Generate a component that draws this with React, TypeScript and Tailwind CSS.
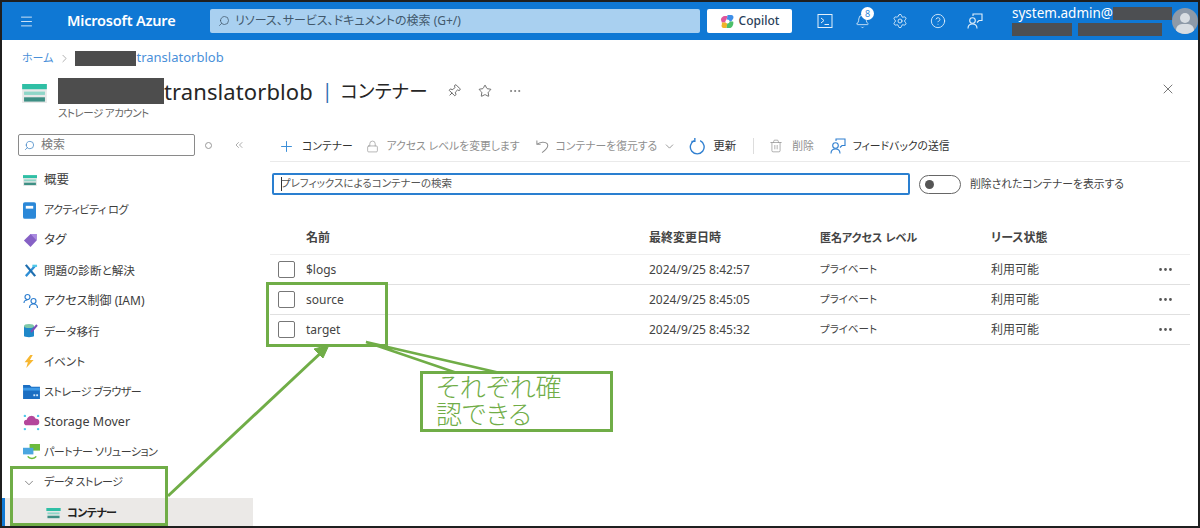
import { Bell, ChevronDown, ChevronRight, ChevronsLeft, CircleHelp, Ellipsis, Lock, Menu, Pin, Plus, Search, Settings, Star, Trash2, X } from "lucide-react";

const font = "font-['Noto_Sans','Noto_Sans_CJK_JP',sans-serif] [font-feature-settings:'palt']";
const narrow = "text-[11px] tracking-[-0.5px]";

function StorageIcon({ className }: { className: string }) {
  return (
    <svg viewBox="0 0 26 20" className={className}>
      <rect x="0" y="0" width="26" height="20" fill="#e8e8e8" />
      <rect x="0" y="0" width="26" height="5.5" fill="#2fbfa5" />
      <rect x="2" y="8" width="22" height="3.5" fill="#8fd6c8" />
      <rect x="2" y="14" width="22" height="4.5" fill="#3d8f84" />
    </svg>
  );
}

function LogIcon() {
  return (
    <svg viewBox="0 0 14 18" className="w-[13px] h-[17px]">
      <rect width="14" height="18" rx="2" fill="#2b88d8" />
      <rect x="3" y="4" width="8" height="3" fill="#fff" />
    </svg>
  );
}

function TagIcon() {
  return (
    <svg viewBox="0 0 16 16" className="w-[15px] h-[15px]">
      <path d="M1 8 8 1h6.5v7L8 15z" fill="#8661c5" />
      <path d="M8 1h6.5v7z" fill="#a98ae0" />
    </svg>
  );
}

function ToolsIcon() {
  return (
    <svg viewBox="0 0 16 16" className="w-[15px] h-[15px]" fill="none" strokeWidth="2.4">
      <path d="M3 14 13 3" stroke="#2f8fd6" />
      <path d="M3 2l10 12" stroke="#1f6fb0" />
      <path d="M10 3h5" stroke="#50c8e8" />
    </svg>
  );
}

function IamIcon() {
  return (
    <svg viewBox="0 0 16 16" className="w-[16px] h-[16px]" fill="none" stroke="#2f7fd0" strokeWidth="1.2">
      <circle cx="4.5" cy="4" r="2.5" />
      <path d="M1 10c0-2 1.5-3 3.5-3" />
      <circle cx="10.5" cy="8" r="2.5" />
      <path d="M6.5 15c0-2.500 1.500-4 4-4s4 1.500 4 4" />
    </svg>
  );
}

function MigrateIcon() {
  return (
    <svg viewBox="0 0 16 16" className="w-[16px] h-[16px]">
      <path d="M1 3h10v10c0 1.500-10 1.500-10 0z" fill="#1f88c9" />
      <ellipse cx="6" cy="3" rx="5" ry="2" fill="#7fc8a9" />
      <path d="M8 9l6-7" stroke="#7b4fb5" strokeWidth="2" />
    </svg>
  );
}

function BoltIcon() {
  return (
    <svg viewBox="0 0 16 16" className="w-[13px] h-[15px]">
      <path d="M9 0 2 9h4l-2 7 9-10H8.500L12 0z" fill="#f7b731" />
    </svg>
  );
}

function BrowserIcon() {
  return (
    <svg viewBox="0 0 18 16" className="w-[17px] h-[15px]">
      <path d="M0 1h7l2 2h9v13H0z" fill="#1b6ec2" />
      <rect x="0" y="4" width="18" height="3" fill="#3f9be8" />
      <rect x="11" y="11" width="2" height="2" fill="#cfe6fb" />
      <rect x="14" y="11" width="2" height="2" fill="#cfe6fb" />
    </svg>
  );
}

function MoverIcon() {
  return (
    <svg viewBox="0 0 18 18" className="w-[17px] h-[17px]">
      <path d="M4 12a3 3 0 0 1 0-6 5 5 0 0 1 9.500-1A3.500 3.500 0 0 1 14 12z" fill="#b4479b" />
      <circle cx="2" cy="2" r="1.300" fill="#50c8e8" />
      <circle cx="16" cy="2" r="1.300" fill="#50c8e8" />
      <circle cx="2" cy="16" r="1.300" fill="#50c8e8" />
      <circle cx="16" cy="16" r="1.300" fill="#50c8e8" />
    </svg>
  );
}

function PartnerIcon() {
  return (
    <svg viewBox="0 0 18 18" className="w-[17px] h-[17px]">
      <rect x="7" y="0" width="11" height="7" fill="#6cbb3c" />
      <rect x="0" y="4" width="11" height="7" fill="#4aa6e0" />
      <path d="M5 13a5 4 0 0 0 9 0" fill="none" stroke="#6cbb3c" strokeWidth="1.600" />
    </svg>
  );
}

function CopilotIcon() {
  return (
    <svg viewBox="0 0 16 16" className="w-[15px] h-[15px]">
      <path d="M8 1h4c2 0 3 2 2 4l-2 3H7z" fill="#3f8fe8" />
      <path d="M1 6c0-2 2-4 4-4h3L6 9H2z" fill="#e0559b" />
      <path d="M2 9h6l-1 6H4c-2 0-3-2-2-4z" fill="#f0b429" />
      <path d="M8 8h6c1 3-1 7-4 7H7z" fill="#4cc06a" />
      <circle cx="8" cy="8" r="2.200" fill="#fff" />
    </svg>
  );
}

function TerminalIcon() {
  return (
    <svg viewBox="0 0 16 16" className="ml-[25px] w-[16px] h-[16px]" fill="none" stroke="#e3f0fa" strokeWidth="1">
      <rect x="1" y="1.500" width="14" height="13" />
      <path d="M4 5l3 2.500L4 10M7.500 11.500H12" />
    </svg>
  );
}

function FeedbackIcon({ className, color }: { className: string; color: string }) {
  return (
    <svg viewBox="0 0 16 16" className={className} fill="none" stroke={color} strokeWidth="1.100">
      <circle cx="5.500" cy="7.500" r="2.800" />
      <path d="M1 15.500c0-2.800 1.800-4.500 4.500-4.500s4.500 1.700 4.500 4.500" />
      <path d="M6 3V1h9v6.500h-3l-2 2" />
    </svg>
  );
}

function RefreshIcon() {
  return (
    <svg viewBox="0 0 16 16" className="ml-[13px] w-[17px] h-[17px]" fill="none" stroke="#2f7fd0" strokeWidth="1.300">
      <path d="M10.500 2.500A6.500 6.500 0 1 1 5 2.500" />
      <path d="M5.500 0v3.200H2.300" />
    </svg>
  );
}

function UndoIcon() {
  return (
    <svg viewBox="0 0 16 16" className="ml-[15px] w-[15px] h-[15px]" fill="none" stroke="#8f8f8f" strokeWidth="1.100">
      <path d="M2 1.500v4h4" />
      <path d="M2.500 5.500C5 3 11 2.500 13 5c2 3-2 7-5.500 9.500" />
    </svg>
  );
}

function Avatar() {
  return (
    <div className="relative w-[26px] h-[26px] rounded-full bg-[#8e9aa8] overflow-hidden shrink-0">
      <div className="absolute left-[8px] top-[5px] w-[10px] h-[10px] rounded-full bg-[#d8dde2]" />
      <div className="absolute left-[4px] top-[16px] w-[18px] h-[12px] rounded-full bg-[#d8dde2]" />
    </div>
  );
}

function TopBar() {
  return (
    <div className="h-[38px] bg-[#0f78d4] flex items-center text-white shrink-0">
      <Menu className="w-[15px] h-[15px] ml-[17px] text-[#d7e9f8]" strokeWidth={1.5} />
      <div className="ml-[33px] w-[143px] text-[14.500px] font-semibold tracking-[-0.2px]">Microsoft Azure</div>
      <div className="w-[490px] h-[24px] bg-[#a9d0f0] rounded-[2px] flex items-center pl-[8px] text-[#41586c] text-[12px]">
        <Search className="w-[12px] h-[12px] -scale-x-100" strokeWidth={1.5} />
        <span className="ml-[5px]">リソース、サービス、ドキュメントの検索 (G+/)</span>
      </div>
      <div className="ml-[7px] w-[85px] h-[24px] bg-white rounded-[2px] flex items-center justify-center gap-[4px] text-[#2a3f5a] text-[12px] font-medium">
        <CopilotIcon />
        Copilot
      </div>
      <TerminalIcon />
      <div className="relative ml-[22px] w-[16px]">
        <Bell className="w-[15px] h-[15px] text-[#e3f0fa]" strokeWidth={1.3} />
        <div className="absolute -top-[7px] left-[6px] w-[13px] h-[13px] rounded-full bg-white text-[#2f88d8] text-[9px] leading-[13px] text-center">8</div>
      </div>
      <Settings className="ml-[21px] w-[16px] h-[16px] text-[#e3f0fa]" strokeWidth={1.3} />
      <CircleHelp className="ml-[22px] w-[16px] h-[16px] text-[#e3f0fa]" strokeWidth={1.3} />
      <FeedbackIcon className="ml-[21px] w-[16px] h-[16px]" color="#e3f0fa" />
      <div className="ml-[29px] w-[160px] flex flex-col">
        <div className="flex items-center h-[16px] text-[13.500px] leading-none">
          system.admin@
          <div className="w-[60px] h-[13px] bg-[#4d4f52]" />
        </div>
        <div className="flex items-center gap-[6px] h-[15px]">
          <div className="w-[60px] h-[13px] bg-[#4d4f52]" />
          <div className="w-[84px] h-[13px] bg-[#4d4f52]" />
        </div>
      </div>
      <Avatar />
    </div>
  );
}

function Header() {
  return (
    <div className="h-[83px] shrink-0 pl-[20px] pr-[22px] flex flex-col">
      <div className="h-[36px] flex items-center text-[13px] text-[#4a90d9]">
        <span className="text-[11px]">ホーム</span>
        <ChevronRight className="w-[13px] h-[13px] ml-[5px] mr-[4px] text-[#888]" strokeWidth={1.2} />
        <div className="w-[61px] h-[15px] bg-[#4d4d4d]" />
        translatorblob
      </div>
      <div className="flex items-start">
        <StorageIcon className="w-[25px] h-[19px] mt-[8px] mr-[11px]" />
        <div className="flex flex-col">
          <div className="flex items-center h-[30px] text-[22px] tracking-[0.1px] text-[#262626]">
            <div className="w-[106px] h-[26px] bg-[#4d4d4d]" />
            translatorblob
            <span className="text-[#2f6fae] ml-[9px] mr-[8px] text-[19px]">|</span>
            <span className="text-[18.500px]">コンテナー</span>
            <Pin className="ml-[19px] w-[14px] h-[14px] text-[#444] rotate-45" strokeWidth={1.3} />
            <Star className="ml-[17px] w-[14px] h-[14px] text-[#444]" strokeWidth={1.3} />
            <Ellipsis className="ml-[16px] w-[14px] h-[14px] text-[#666]" strokeWidth={1.3} />
          </div>
          <div className="text-[10.500px] tracking-[-0.5px] leading-[14px] text-[#666]">ストレージ アカウント</div>
        </div>
        <X className="ml-auto mt-[5px] w-[16px] h-[16px] text-[#555]" strokeWidth={1.2} />
      </div>
    </div>
  );
}

const items = [
  { icon: <StorageIcon className="w-[14px] h-[11px]" />, label: "概要", text: "text-[12.500px]" },
  { icon: <LogIcon />, label: "アクティビティ ログ", text: narrow },
  { icon: <TagIcon />, label: "タグ", text: "text-[12.500px]" },
  { icon: <ToolsIcon />, label: "問題の診断と解決", text: "text-[11.600px]" },
  { icon: <IamIcon />, label: "アクセス制御 (IAM)", text: "text-[12px]" },
  { icon: <MigrateIcon />, label: "データ移行", text: "text-[11.600px]" },
  { icon: <BoltIcon />, label: "イベント", text: "text-[11.600px]" },
  { icon: <BrowserIcon />, label: "ストレージ ブラウザー", text: narrow },
  { icon: <MoverIcon />, label: "Storage Mover", text: "text-[12.500px]" },
  { icon: <PartnerIcon />, label: "パートナー ソリューション", text: narrow },
];

function Sidebar() {
  return (
    <div className="w-[251px] shrink-0 flex flex-col">
      <div className="h-[22px] mt-[11px] ml-[16px] flex items-center">
        <div className="w-[177px] h-[22px] border border-[#8a8a8a] rounded-[2px] flex items-center pl-[5px] text-[12px] text-[#777]">
          <Search className="w-[11px] h-[11px] text-[#3b82c4] -scale-x-100" strokeWidth={1.6} />
          <span className="ml-[6px]">検索</span>
        </div>
        <div className="ml-[10px] w-[7px] h-[7px] rounded-full border border-[#999]" />
        <ChevronsLeft className="ml-[21px] w-[12px] h-[12px] text-[#777]" strokeWidth={1.2} />
      </div>
      <div className="mt-[9px] flex flex-col text-[#3d3d3d]">
        {items.map((item) => (
          <div key={item.label} className={`h-[30.25px] flex items-center pl-[21px] ${item.text}`}>
            <div className="w-[21px] flex items-center">{item.icon}</div>
            {item.label}
          </div>
        ))}
        <div className={`h-[30.25px] flex items-center pl-[20px] ${narrow}`}>
          <ChevronDown className="w-[14px] h-[14px] text-[#555] mr-[8px]" strokeWidth={1.2} />
          データ ストレージ
        </div>
        <div className={`h-[31px] flex items-center pl-[41px] bg-[#ebe9e7] border-l-[3px] border-[#0f78d4] font-semibold text-[#222] ${narrow}`}>
          <StorageIcon className="w-[15px] h-[11px] mr-[6px]" />
          コンテナー
        </div>
      </div>
    </div>
  );
}

function Toolbar() {
  const off = "text-[#8f8f8f]";
  return (
    <div className="h-[39px] flex items-center text-[10.800px] text-[#333] border-b border-[#eaeaea] pt-[8px]">
      <Plus className="ml-[8px] w-[17px] h-[17px] text-[#3b8ed8]" strokeWidth={1.4} />
      <span className="ml-[7px]">コンテナー</span>
      <Lock className={`ml-[13px] w-[13px] h-[13px] ${off}`} strokeWidth={1.2} />
      <span className={`ml-[8px] ${off}`}>アクセス レベルを変更します</span>
      <UndoIcon />
      <span className={`ml-[6px] ${off}`}>コンテナーを復元する</span>
      <ChevronDown className={`ml-[6px] w-[13px] h-[13px] text-[#666]`} strokeWidth={1.2} />
      <RefreshIcon />
      <span className="ml-[7px] text-[11.500px]">更新</span>
      <div className="ml-[17px] w-px h-[16px] bg-[#ddd]" />
      <Trash2 className={`ml-[15px] w-[14px] h-[14px] ${off}`} strokeWidth={1.2} />
      <span className={`ml-[9px] ${off}`}>削除</span>
      <FeedbackIcon className="ml-[16px] w-[16px] h-[16px]" color="#2f7fd0" />
      <span className="ml-[7px]">フィードバックの送信</span>
    </div>
  );
}

const rows = [
  { name: "$logs", date: "2024/9/25 8:42:57" },
  { name: "source", date: "2024/9/25 8:45:05" },
  { name: "target", date: "2024/9/25 8:45:32" },
];

function Table() {
  const grid = "grid grid-cols-[36px_343px_171px_171px_1fr_33px] items-center";
  return (
    <div className="mt-[27px] text-[12px]">
      <div className={`${grid} h-[33px] font-semibold text-[#444] border-b border-[#eeeeee]`}>
        <div />
        <div>名前</div>
        <div>最終変更日時</div>
        <div className="text-[11px]">匿名アクセス レベル</div>
        <div>リース状態</div>
        <div />
      </div>
      {rows.map((row) => (
        <div key={row.name} className={`${grid} h-[30px] text-[#444] border-b border-[#e0e0e0]`}>
          <div className="pl-[8px]">
            <div className="w-[17px] h-[17px] border border-[#777] rounded-[2px]" />
          </div>
          <div>{row.name}</div>
          <div>{row.date}</div>
          <div className="text-[10.500px]">プライベート</div>
          <div>利用可能</div>
          <Ellipsis className="w-[17px] h-[17px] text-[#555]" />
        </div>
      ))}
    </div>
  );
}

function Annotations() {
  return (
    <>
      <svg className="absolute -left-[2px] -top-[2px] pointer-events-none" width="1200" height="528" fill="none" stroke="#70ad47">
        <path d="M168 496 326 348" strokeWidth="3" />
        <path d="M329 345l-15 4 9 9z" fill="#70ad47" strokeWidth="1" />
        <path d="M366 342 500 373H457z" fill="#fff" strokeWidth="2.500" />
      </svg>
      <div className="absolute left-[8px] top-[464px] w-[158px] h-[60px] border-[3px] border-[#70ad47]" />
      <div className="absolute left-[264px] top-[280px] w-[122px] h-[65px] border-[3px] border-[#70ad47]" />
      <div className="absolute left-[418px] top-[369px] w-[193px] h-[61px] border-[3px] border-[#70ad47] bg-white pl-[13px] text-[#70ad47] text-[26px] font-light leading-[27px] [font-feature-settings:'normal']">
        それぞれ確
        <br />
        認できる
      </div>
    </>
  );
}

export default function App() {
  return (
    <div className={`relative w-[1200px] h-[528px] overflow-hidden bg-white border-2 border-[#1f1f1f] flex flex-col ${font}`}>
      <TopBar />
      <Header />
      <div className="flex flex-1 min-h-0">
        <Sidebar />
        <div className="flex-1 pl-[17px] pr-[8px]">
          <Toolbar />
          <div className="mt-[11px] flex items-center pl-[2px]">
            <div className="w-[638px] h-[22px] border-2 border-[#2a7fd0] rounded-[2px] flex items-center pl-[7px] text-[10.500px] text-[#555]">
              <div className="w-px h-[14px] bg-[#333] -mr-[1px]" />
              プレフィックスによるコンテナーの検索
            </div>
            <div className="ml-[9px] w-[42px] h-[19px] border border-[#666] rounded-full flex items-center pl-[5px]">
              <div className="w-[9px] h-[9px] rounded-full bg-[#555]" />
            </div>
            <span className="ml-[9px] text-[10.800px] text-[#444]">削除されたコンテナーを表示する</span>
          </div>
          <Table />
        </div>
      </div>
      <Annotations />
    </div>
  );
}
